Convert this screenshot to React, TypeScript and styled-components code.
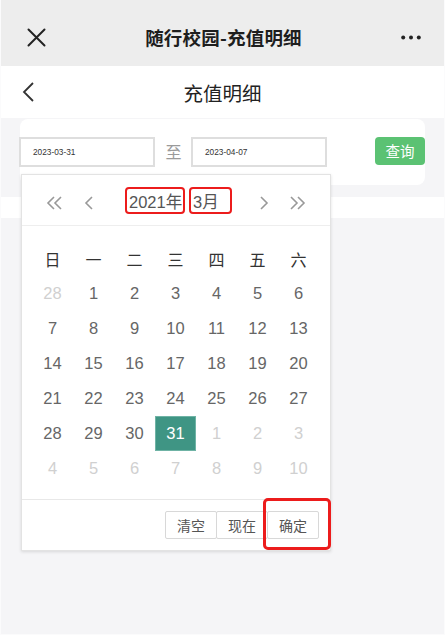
import React from 'react';
import styled, { createGlobalStyle } from 'styled-components';

const GlobalStyle = createGlobalStyle`
  html, body {
    margin: 0;
    padding: 0;
    background: #f5f5f7;
  }
  body {
    font-family: 'Liberation Sans', 'Noto Sans CJK SC', sans-serif;
  }
`;

const Page = styled.div`
  width: 445px;
  height: 635px;
  background: #f5f5f7;
  border-left: 1px solid #fbfbfc;
  border-right: 1px solid #fbfbfc;
  border-bottom: 1px solid #fbfbfc;
  box-sizing: border-box;
  position: relative;
  overflow: hidden;
`;

const TopBar = styled.div`
  height: 66px;
  background: #ededed;
  display: flex;
  align-items: center;
  justify-content: space-between;
  padding: 8px 22px 0 24px;
  box-sizing: border-box;
`;

const TopTitle = styled.div`
  font-family: 'Noto Sans CJK SC', sans-serif;
  font-size: 18.5px;
  font-weight: 600;
  color: #1e1e1e;
  letter-spacing: 0.2px;
`;

const IconBox = styled.div`
  width: 22px;
  display: flex;
  align-items: center;
  justify-content: center;
`;

const Header = styled.div`
  height: 52px;
  background: #fff;
  display: flex;
  align-items: center;
  padding: 0 0 0 20px;
  position: relative;
`;

const HeaderTitle = styled.div`
  position: absolute;
  left: 0;
  right: 0;
  top: 12px;
  text-align: center;
  font-family: 'Noto Sans CJK SC', sans-serif;
  font-size: 19.5px;
  color: #222;
`;

const Content = styled.div`
  padding-top: 1px;
`;

const Card = styled.div`
  margin: 0 19px;
  background: #fff;
  border-radius: 8px;
  height: 66px;
  display: flex;
  align-items: center;
`;

const DateInput = styled.div`
  width: 136px;
  height: 30px;
  box-sizing: border-box;
  border: 2px solid #dedede;
  display: flex;
  align-items: center;
  padding-left: 12px;
  font-size: 8.3px;
  color: #333;
  margin-left: -1px;
`;

const Sep = styled.div`
  width: 37px;
  text-align: center;
  font-family: 'Noto Sans CJK SC', sans-serif;
  font-size: 16px;
  color: #9a9a9a;
  margin-top: -2px;
`;

const QueryButton = styled.div`
  margin-left: auto;
  width: 50px;
  height: 28px;
  border-radius: 4px;
  background: #5bc273;
  color: #fff;
  font-family: 'Noto Sans CJK SC', sans-serif;
  font-size: 14.5px;
  display: flex;
  align-items: center;
  justify-content: center;
  margin-top: -3px;
`;

const WhiteBand = styled.div`
  margin-top: 12px;
  height: 21px;
  background: #fff;
`;

const Picker = styled.div`
  position: absolute;
  left: 20px;
  top: 174px;
  width: 310px;
  height: 377px;
  box-sizing: border-box;
  background: #fff;
  border: 1px solid #e3e3e3;
  box-shadow: 0 1px 3px rgba(0, 0, 0, 0.12);
  display: flex;
  flex-direction: column;
`;

const PickerHead = styled.div`
  height: 50px;
  border-bottom: 1px solid #eeeeee;
  display: flex;
  align-items: center;
  position: relative;
`;

const NavIcon = styled.div<{ $x: number }>`
  position: absolute;
  left: ${p => p.$x}px;
  top: 21px;
  display: flex;
`;

const YearMonth = styled.div`
  position: absolute;
  left: 103px;
  top: 12px;
  display: flex;
  gap: 4px;
`;

const Marked = styled.span<{ $w: number }>`
  width: ${p => p.$w}px;
  height: 27px;
  box-sizing: border-box;
  border: 2.5px solid #ec1c1c;
  border-radius: 4px;
  display: flex;
  align-items: center;
  padding-left: 2px;
  white-space: nowrap;
  font-size: 16.5px;
  color: #555;
  font-family: 'Liberation Sans', 'Noto Sans CJK SC', sans-serif;
`;

const Grid = styled.div`
  display: grid;
  grid-template-columns: repeat(7, 41px);
  grid-auto-rows: 35px;
  padding: 15px 0 13px 10px;
`;

const WeekDay = styled.div`
  display: flex;
  align-items: center;
  justify-content: center;
  font-family: 'Noto Sans CJK SC', sans-serif;
  font-size: 16px;
  color: #333;
`;

const Day = styled.div<{ $muted?: boolean; $active?: boolean }>`
  display: flex;
  align-items: center;
  justify-content: center;
  font-size: 16.5px;
  color: ${p => (p.$active ? '#fff' : p.$muted ? '#d0d0d0' : '#666')};
  background: ${p => (p.$active ? '#3f9584' : 'transparent')};
  box-shadow: ${p => (p.$active ? 'inset 0 0 0 1px #6fb3a5' : 'none')};
`;

const Footer = styled.div`
  border-top: 1px solid #e8e8e8;
  flex: 1;
  display: flex;
  justify-content: flex-end;
  align-items: flex-start;
  padding: 11px 11px 0 0;
  position: relative;
`;

const FootButton = styled.div`
  width: 52px;
  height: 28px;
  box-sizing: border-box;
  border: 1px solid #d8d8d8;
  border-radius: 2px;
  margin-left: -1px;
  display: flex;
  align-items: center;
  justify-content: center;
  font-family: 'Noto Sans CJK SC', sans-serif;
  font-size: 14px;
  color: #555;
  background: #fff;
`;

const Annotation = styled.div`
  position: absolute;
  left: 241px;
  top: -2px;
  width: 68px;
  height: 52px;
  box-sizing: border-box;
  border: 3px solid #ec1c1c;
  border-radius: 5px;
`;

const CloseIcon = () => (
  <svg width="19" height="19" viewBox="0 0 19 19">
    <path d="M1.5 1.5 L17.5 17.5 M17.5 1.5 L1.5 17.5" stroke="#222" strokeWidth="2" strokeLinecap="round" />
  </svg>
);

const MoreIcon = () => (
  <svg width="20" height="5" viewBox="0 0 20 5">
    <circle cx="2.2" cy="2.5" r="2" fill="#222" />
    <circle cx="10" cy="2.5" r="2" fill="#222" />
    <circle cx="17.8" cy="2.5" r="2" fill="#222" />
  </svg>
);

const BackIcon = () => (
  <svg width="14" height="20" viewBox="0 0 14 20">
    <path d="M12 1 L3 10 L12 19" fill="none" stroke="#333" strokeWidth="1.8" />
  </svg>
);

const Chevron = ({ dir, double }: { dir: 'l' | 'r'; double?: boolean }) => {
  const one = dir === 'l' ? 'M8 1 L2 7 L8 13' : 'M2 1 L8 7 L2 13';
  const two = dir === 'l' ? 'M15 1 L9 7 L15 13' : 'M9 1 L15 7 L9 13';
  return (
    <svg width={double ? 18 : 10} height="14" viewBox={double ? '0 0 18 14' : '0 0 10 14'}>
      <path d={one} fill="none" stroke="#999" strokeWidth="1.6" />
      {double && <path d={two} fill="none" stroke="#999" strokeWidth="1.6" />}
    </svg>
  );
};

const weekDays = ['日', '一', '二', '三', '四', '五', '六'];

const days: { n: number; muted?: boolean; active?: boolean }[] = [
  { n: 28, muted: true },
  ...Array.from({ length: 31 }, (_, i) => ({ n: i + 1, active: i === 30 })),
  ...Array.from({ length: 10 }, (_, i) => ({ n: i + 1, muted: true })),
];

const App = () => (
  <Page>
    <GlobalStyle />
    <TopBar>
      <IconBox><CloseIcon /></IconBox>
      <TopTitle>随行校园-充值明细</TopTitle>
      <IconBox><MoreIcon /></IconBox>
    </TopBar>
    <Header>
      <BackIcon />
      <HeaderTitle>充值明细</HeaderTitle>
    </Header>
    <Content>
      <Card>
        <DateInput>2023-03-31</DateInput>
        <Sep>至</Sep>
        <DateInput>2023-04-07</DateInput>
        <QueryButton>查询</QueryButton>
      </Card>
      <WhiteBand />
    </Content>
    <Picker>
      <PickerHead>
        <NavIcon $x={24}><Chevron dir="l" double /></NavIcon>
        <NavIcon $x={62}><Chevron dir="l" /></NavIcon>
        <YearMonth>
          <Marked $w={60}>2021年</Marked>
          <Marked $w={43}>3月</Marked>
        </YearMonth>
        <NavIcon $x={237}><Chevron dir="r" /></NavIcon>
        <NavIcon $x={267}><Chevron dir="r" double /></NavIcon>
      </PickerHead>
      <Grid>
        {weekDays.map(w => (
          <WeekDay key={w}>{w}</WeekDay>
        ))}
        {days.map((d, i) => (
          <Day key={i} $muted={d.muted} $active={d.active}>{d.n}</Day>
        ))}
      </Grid>
      <Footer>
        <FootButton>清空</FootButton>
        <FootButton>现在</FootButton>
        <FootButton>确定</FootButton>
        <Annotation />
      </Footer>
    </Picker>
  </Page>
);

export default App;
